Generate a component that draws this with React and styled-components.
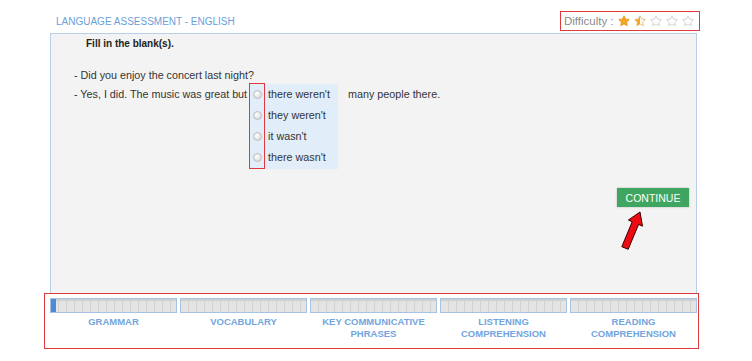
import React from "react";
import styled, { createGlobalStyle } from "styled-components";

const GlobalStyle = createGlobalStyle`
  body {
    margin: 0;
    background: #ffffff;
    font-family: "Liberation Sans", Arial, sans-serif;
  }
`;

const Page = styled.div`
  width: 656px;
  padding-left: 44px;
`;

const Header = styled.div`
  display: flex;
  align-items: center;
  justify-content: space-between;
  margin-top: 11px;
  margin-bottom: 2px;
`;

const Title = styled.div`
  margin-left: 12px;
  font-size: 10px;
  color: #6a9fd8;
`;

/* red outline is an annotation in the screenshot */
const Difficulty = styled.div`
  display: flex;
  align-items: center;
  gap: 4px;
  box-sizing: border-box;
  width: 140px;
  height: 20px;
  padding-left: 3px;
  border: 1px solid #e0393e;
  font-size: 11.5px;
  color: #8a8a8a;
`;

const Stars = styled.div`
  display: flex;
  gap: 4px;
`;

const Panel = styled.div`
  position: relative;
  display: flex;
  flex-direction: column;
  box-sizing: border-box;
  width: 647px;
  height: 260px;
  margin-left: 6px;
  background: #f3f3f3;
  border: 1px solid #b7cfea;
  border-bottom: none;
`;

const Instruction = styled.div`
  margin: 4px 0 0 35px;
  font-size: 10px;
  line-height: 12px;
  font-weight: bold;
  color: #222;
`;

const Dialogue = styled.div`
  margin: 17px 0 0 23px;
  font-size: 10.75px;
  color: #333;
`;

const Line = styled.div`
  line-height: 16px;
`;

const AnswerLine = styled.div`
  display: flex;
  align-items: flex-start;
  margin-top: 1px;
`;

const Inline = styled.span`
  line-height: 21px;
  margin-left: ${(p) => p.$offset || 0}px;
  margin-right: ${(p) => p.$gap || 0}px;
`;

const Options = styled.div`
  display: flex;
  background: #e1edf9;
`;

const RadioColumn = styled.div`
  display: flex;
  flex-direction: column;
  width: 14px;
  border: 1px solid #e0393e;
  margin-top: -1px;
`;

const RadioCell = styled.div`
  display: flex;
  align-items: center;
  justify-content: center;
  height: 21px;
`;

const Radio = styled.span`
  box-sizing: border-box;
  width: 9px;
  height: 9px;
  border-radius: 50%;
  border: 1px solid #bdbdbd;
  background: radial-gradient(circle at 40% 35%, #ffffff 0%, #e6e6e6 55%, #cfcfcf 100%);
`;

const LabelColumn = styled.div`
  display: flex;
  flex-direction: column;
  width: 73px;
`;

const OptionLabel = styled.div`
  height: 21px;
  line-height: 21px;
  padding-left: 3px;
`;

const ButtonRow = styled.div`
  display: flex;
  justify-content: flex-end;
  margin: 19px 7px 0 0;
`;

const ContinueButton = styled.button`
  width: 72px;
  height: 19px;
  padding: 0;
  border: none;
  background: #3ea660;
  color: #ffffff;
  font-family: "Liberation Sans", Arial, sans-serif;
  font-size: 10.5px;
  box-shadow: 0 0 2px rgba(0, 0, 0, 0.25);
`;

const Arrow = styled.svg`
  position: absolute;
  left: 567px;
  top: 174px;
`;

const Nav = styled.div`
  box-sizing: border-box;
  width: 655px;
  height: 56px;
  padding: 4px 1px 0 5px;
  border: 1px solid #e0393e;
`;

const Bars = styled.div`
  display: grid;
  grid-template-columns: repeat(5, 127px);
  column-gap: 3px;
`;

const Bar = styled.div`
  position: relative;
  box-sizing: border-box;
  height: 15px;
  border: 1px solid #a6c3e4;
  background:
    linear-gradient(#cfcfcf, #cfcfcf) top / 100% 2px no-repeat,
    repeating-linear-gradient(90deg, #e4e4e4 0 7px, #d2d2d2 7px 8px);
`;

const Fill = styled.div`
  width: ${(p) => p.$w}px;
  height: 100%;
  background: #4a8ad6;
`;

const Labels = styled.div`
  display: grid;
  grid-template-columns: repeat(5, 127px);
  column-gap: 3px;
  margin-top: 3px;
`;

const Label = styled.div`
  text-align: center;
  font-size: 9.5px;
  line-height: 12px;
  font-weight: bold;
  color: #72a5dd;
`;

const Star = ({ fill }) => (
  <svg width="12" height="12" viewBox="0 0 24 24">
    <defs>
      <linearGradient id="half">
        <stop offset="50%" stopColor="#f5a623" />
        <stop offset="50%" stopColor="#ffffff" />
      </linearGradient>
    </defs>
    <path
      d="M12 1.5l3.2 6.6 7.3 1-5.3 5.1 1.3 7.2L12 18l-6.5 3.4 1.3-7.2L1.5 9.1l7.3-1z"
      fill={fill === "full" ? "#f5a623" : fill === "half" ? "url(#half)" : "#ffffff"}
      stroke={fill === "full" ? "#e8961a" : fill === "half" ? "#e8b060" : "#c9c9c9"}
      strokeWidth="1.6"
      strokeLinejoin="round"
    />
  </svg>
);

const options = ["there weren't", "they weren't", "it wasn't", "there wasn't"];
const sections = [
  ["GRAMMAR"],
  ["VOCABULARY"],
  ["KEY COMMUNICATIVE", "PHRASES"],
  ["LISTENING", "COMPREHENSION"],
  ["READING", "COMPREHENSION"],
];

export default function App() {
  return (
    <Page>
      <GlobalStyle />
      <Header>
        <Title>LANGUAGE ASSESSMENT - ENGLISH</Title>
        <Difficulty>
          <span>Difficulty :</span>
          <Stars>
            <Star fill="full" />
            <Star fill="half" />
            <Star />
            <Star />
            <Star />
          </Stars>
        </Difficulty>
      </Header>

      <Panel>
        <Instruction>Fill in the blank(s).</Instruction>
        <Dialogue>
          <Line>- Did you enjoy the concert last night?</Line>
          <AnswerLine>
            <Inline $gap={2}>- Yes, I did. The music was great but</Inline>
            <Options>
              <RadioColumn>
                {options.map((o) => (
                  <RadioCell key={o}>
                    <Radio />
                  </RadioCell>
                ))}
              </RadioColumn>
              <LabelColumn>
                {options.map((o) => (
                  <OptionLabel key={o}>{o}</OptionLabel>
                ))}
              </LabelColumn>
            </Options>
            <Inline $offset={10}>many people there.</Inline>
          </AnswerLine>
        </Dialogue>
        <ButtonRow>
          <ContinueButton>CONTINUE</ContinueButton>
        </ButtonRow>
        <Arrow width="30" height="46" viewBox="0 0 30 46">
          <polygon
            points="22,4 24.5,18.2 20.6,16.4 10.2,41.3 3.8,38.7 14.2,13.8 10.4,12"
            fill="#ee0a12"
            stroke="#3a0000"
            strokeWidth="1"
            strokeLinejoin="round"
          />
        </Arrow>
      </Panel>

      <Nav>
        <Bars>
          {sections.map((s, i) => (
            <Bar key={s.join()}>{i === 0 && <Fill $w={5} />}</Bar>
          ))}
        </Bars>
        <Labels>
          {sections.map((s) => (
            <Label key={s.join()}>
              {s.map((l) => (
                <div key={l}>{l}</div>
              ))}
            </Label>
          ))}
        </Labels>
      </Nav>
    </Page>
  );
}
